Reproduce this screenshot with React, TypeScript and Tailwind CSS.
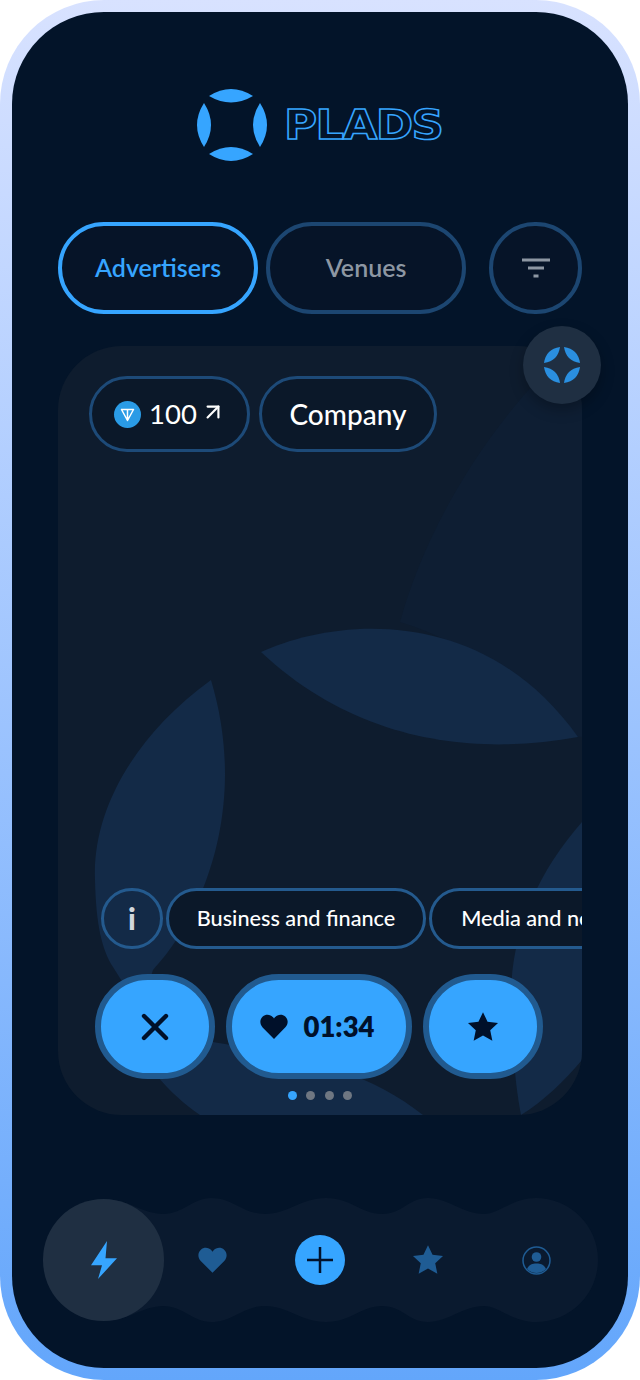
import { ArrowUpRight, X } from "lucide-react";

const heartPath =
  "M12 21.5 2.9 12.3C.4 9.7.5 5.8 3 3.6c2.4-2.1 6.2-1.8 8.3.7l.7.9.7-.9c2.1-2.5 5.9-2.8 8.3-.7 2.5 2.2 2.6 6.100.1 8.7L12 21.5Z";
const starPath = "M12 1.500 15.200 8.300 22.600 9.200 17.100 14.300 18.600 21.700 12 18 5.400 21.700 6.900 14.300 1.400 9.200 8.800 8.300Z";

function Logo() {
  return (
    <div className="flex items-center justify-center pr-[2px]">
      <svg width="72" height="72" viewBox="0 0 72 72" fill="#36a5ff" className="overflow-visible">
        <path d="M14 7Q36-7 58 7 36 20 14 7Z" />
        <path d="M14 65Q36 51 58 65 36 79 14 65Z" />
        <path d="M9 14Q-5 36 9 58 23 36 9 14Z" />
        <path d="M65 14Q79 36 65 58 51 36 65 14Z" />
      </svg>
      <span className="ml-[17px] w-[159px] origin-left scale-x-[1.1] [font-family:'DejaVu_Sans',sans-serif] font-bold text-[41px] leading-none tracking-[-1.500px] text-[#031429] [-webkit-text-stroke:1.5px_#36a5ff]">
        PLADS
      </span>
    </div>
  );
}

function Tabs() {
  return (
    <div className="flex items-center mt-[61px] pl-[46px]">
      <button className="w-[200px] h-[92px] rounded-full border-4 border-[#36a5ff] bg-[#061428] text-[25px] font-semibold text-[#36a5ff]">
        Advertisers
      </button>
      <button className="ml-2 w-[200px] h-[92px] rounded-full border-4 border-[#1c4671] bg-[#061428] text-[25px] font-semibold text-[#8d97a3]">
        Venues
      </button>
      <button className="ml-[23px] w-[93px] h-[92px] rounded-full border-4 border-[#1c4671] bg-[#061428] flex items-center justify-center">
        <svg width="30" height="22" viewBox="0 0 30 22" stroke="#8d97a3" strokeWidth="3">
          <path d="M1 3h28M7 11h16M12.500 19h5" />
        </svg>
      </button>
    </div>
  );
}

function CardShapes() {
  return (
    <svg className="absolute left-0 top-0" width="524" height="769" viewBox="58 346 524 769">
      <path d="M400 622C420 550 460 470 524 395 545 372 565 358 582 352V737L560 736C520 680 460 640 400 622Z" fill="#0e1e33" />
      <g fill="#132a47">
        <path d="M261 652C330 620 480 600 578 737 480 755 360 745 261 652Z" />
        <path d="M211 680C135 735 92 810 95 880 96 925 102 950 113 967L140 1010 153 970C200 920 250 810 211 680Z" />
        <path d="M120 1020C190 1050 330 1040 423 1115H200C170 1095 140 1060 120 1020Z" />
        <path d="M582 822C540 870 510 930 511 1000 512 1050 516 1090 521 1115 545 1100 565 1080 582 1060Z" />
      </g>
    </svg>
  );
}

function TonBadge() {
  return (
    <span className="w-[27px] h-[27px] rounded-full bg-[#2a9be6] flex items-center justify-center">
      <svg width="15" height="15" viewBox="0 0 15 15" fill="none" stroke="#fff" strokeWidth="1.500" strokeLinejoin="round">
        <path d="M1.500 2.500h12L7.500 13.500 1.500 2.500ZM7.500 2.500v11M1.500 2.500" />
      </svg>
    </span>
  );
}

function Card() {
  return (
    <div className="relative mt-[32px] ml-[46px] w-[524px] h-[769px]">
      <div className="relative w-full h-full rounded-[64px] overflow-hidden bg-[#0e1c2e] flex flex-col">
        <CardShapes />
        <div className="relative flex gap-[9px] pl-[31px] pt-[30px]">
          <div className="flex items-center w-[161px] h-[76px] rounded-full border-[3px] border-[#1d4a78] bg-[#0b1829] pl-[22px]">
            <TonBadge />
            <span className="ml-[8px] text-[27.500px] text-white">100</span>
            <ArrowUpRight className="ml-[3px] mb-[4px] text-white" size={26} strokeWidth={2} />
          </div>
          <div className="flex items-center justify-center w-[178px] h-[76px] rounded-full border-[3px] border-[#1d4a78] bg-[#0b1829] text-[28px] font-medium text-white">
            Company
          </div>
        </div>

        <div className="relative mt-auto flex items-center pl-[43px] gap-[3px] whitespace-nowrap">
          <div className="shrink-0 flex items-center justify-center w-[62px] h-[61px] rounded-full border-[3px] border-[#245a8e] text-[30px] font-black text-[#d2d7dc]">
            i
          </div>
          <div className="shrink-0 flex items-center justify-center w-[260px] h-[61px] rounded-full border-[3px] border-[#245a8e] bg-[#0b1829] text-[21.700px] font-medium text-white">
            Business and finance
          </div>
          <div className="shrink-0 flex items-center justify-center w-[220px] h-[61px] rounded-full border-[3px] border-[#245a8e] bg-[#0b1829] text-[21.700px] font-medium text-white">
            Media and news
          </div>
        </div>

        <div className="relative mt-[25px] flex items-center pl-[37px] gap-[11px]">
          <button className="flex items-center justify-center w-[120px] h-[105px] rounded-full border-[6px] border-[#215a8f] bg-[#36a5ff]">
            <X size={44} strokeWidth={2.400} className="text-[#00102a]" />
          </button>
          <button className="flex items-center justify-center w-[186px] h-[105px] rounded-full border-[6px] border-[#215a8f] bg-[#36a5ff] pr-[4px] text-[27.500px] font-extrabold text-[#00102a]">
            <svg width="30" height="30" viewBox="0 0 24 24" fill="#00102a" className="mr-[14px]">
              <path d={heartPath} />
            </svg>
            01:34
          </button>
          <button className="flex items-center justify-center w-[120px] h-[105px] rounded-full border-[6px] border-[#215a8f] bg-[#36a5ff]">
            <svg width="34" height="34" viewBox="0 0 24 24" fill="#00102a">
              <path d={starPath} />
            </svg>
          </button>
        </div>

        <div className="relative flex justify-center gap-[9.500px] mt-[12px] mb-[15px]">
          <span className="w-[9px] h-[9px] rounded-full bg-[#36a5ff]" />
          <span className="w-[9px] h-[9px] rounded-full bg-[#6f7782]" />
          <span className="w-[9px] h-[9px] rounded-full bg-[#6f7782]" />
          <span className="w-[9px] h-[9px] rounded-full bg-[#6f7782]" />
        </div>
      </div>

      <div className="absolute -right-[19px] -top-[20px] w-[78px] h-[78px] rounded-full bg-[#1f2f42] shadow-[0_6px_14px_rgba(0,0,0,0.25)] flex items-center justify-center">
        <svg width="40" height="40" viewBox="0 0 40 40" fill="#2a8fe0">
          <path d="M2 18Q4 4 18 2 16 16 2 18Z" />
          <path d="M38 18Q36 4 22 2 24 16 38 18Z" />
          <path d="M2 22Q4 36 18 38 16 24 2 22Z" />
          <path d="M38 22Q36 36 22 38 24 24 38 22Z" />
        </svg>
      </div>
    </div>
  );
}

function BottomNav() {
  return (
    <div className="relative mt-auto mb-[46px] ml-[31px] w-[556px] h-[124px]">
      <svg className="absolute left-0 top-0" width="556" height="124" viewBox="0 0 556 124" fill="#0a1a2f">
        <path d="M61 1C85 1 100 16 120 16 140 16 150 0 168 0 190 0 200 16 222 16 245 16 258 0 283 0 308 0 318 16 339 16 360 16 365 0 385 0 405 0 420 16 441 16 455 16 470 0 493 0A62 62 0 0 1 493 124C470 124 455 108 441 108 420 108 405 124 385 124 365 124 360 108 339 108 318 108 308 124 283 124 258 124 245 108 222 108 200 108 190 124 168 124 150 124 140 108 120 108 100 108 85 123 61 123Z" />
      </svg>
      <div className="relative flex h-full items-center">
        <div className="shrink-0 w-[121px] h-[122px] rounded-full bg-[#1f2f42] flex items-center justify-center">
          <svg width="26" height="38" viewBox="0 0 26 38" fill="#36a5ff">
            <path d="M16 0 0 24.300H11L7 38 26 17.300H14.500Z" />
          </svg>
        </div>
        <div className="w-[94px] flex justify-center shrink-0 ml-[1px]">
          <svg width="31" height="31" viewBox="0 0 24 24" fill="#1f5c94">
            <path d={heartPath} />
          </svg>
        </div>
        <div className="w-[122px] flex justify-center shrink-0">
          <div className="w-[50px] h-[50px] rounded-full bg-[#36a5ff] flex items-center justify-center">
            <svg width="26" height="26" viewBox="0 0 26 26" stroke="#02132b" strokeWidth="2.500">
              <path d="M13 0v26M0 13h26" />
            </svg>
          </div>
        </div>
        <div className="w-[94px] flex justify-center shrink-0">
          <svg width="34" height="34" viewBox="0 0 24 24" fill="#1f5c94">
            <path d={starPath} />
          </svg>
        </div>
        <div className="w-[122px] flex justify-center shrink-0">
          <svg width="29" height="29" viewBox="0 0 29 29" fill="#1f5c94">
            <circle cx="14.500" cy="14.500" r="13.500" fill="none" stroke="#1f5c94" strokeWidth="1.500" />
            <circle cx="14.500" cy="11" r="4.800" />
            <path d="M5 23c2-4.500 5.500-5.500 9.500-5.500S22 18.500 24 23c-2.500 2.500-5.800 4-9.500 4S7.500 25.500 5 23Z" />
          </svg>
        </div>
      </div>
    </div>
  );
}

export default function App() {
  return (
    <div className="w-[640px] h-[1380px] bg-white [font-family:Lato,sans-serif]">
      <div className="w-full h-full p-3 rounded-[104px] bg-gradient-to-b from-[#d8e2ff] to-[#63a6fb]">
        <div className="w-full h-full pt-[77px] rounded-[92px] bg-[#031429] flex flex-col">
          <Logo />
          <Tabs />
          <Card />
          <BottomNav />
        </div>
      </div>
    </div>
  );
}
